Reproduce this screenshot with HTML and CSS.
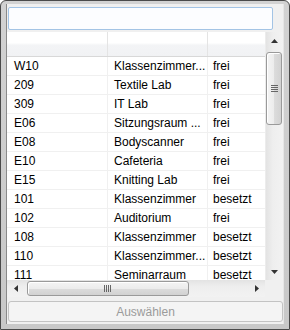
FILE: index.html
```html
<!DOCTYPE html>
<html>
<head>
<meta charset="utf-8">
<link rel="stylesheet" href="styles.css">
</head>
<body>
<div class="win">
  <div class="client">
    <div class="search"></div>
    <div class="list">
      <div class="main">
        <div class="head">
          <div class="hc c1"></div><div class="hc c2"></div><div class="hc c3"></div>
        </div>
        <div class="rows">
          <div class="row"><div class="c c1">W10</div><div class="c c2">Klassenzimmer...</div><div class="c c3">frei</div></div>
          <div class="row"><div class="c c1">209</div><div class="c c2">Textile Lab</div><div class="c c3">frei</div></div>
          <div class="row"><div class="c c1">309</div><div class="c c2">IT Lab</div><div class="c c3">frei</div></div>
          <div class="row"><div class="c c1">E06</div><div class="c c2">Sitzungsraum ...</div><div class="c c3">frei</div></div>
          <div class="row"><div class="c c1">E08</div><div class="c c2">Bodyscanner</div><div class="c c3">frei</div></div>
          <div class="row"><div class="c c1">E10</div><div class="c c2">Cafeteria</div><div class="c c3">frei</div></div>
          <div class="row"><div class="c c1">E15</div><div class="c c2">Knitting Lab</div><div class="c c3">frei</div></div>
          <div class="row"><div class="c c1">101</div><div class="c c2">Klassenzimmer</div><div class="c c3">besetzt</div></div>
          <div class="row"><div class="c c1">102</div><div class="c c2">Auditorium</div><div class="c c3">frei</div></div>
          <div class="row"><div class="c c1">108</div><div class="c c2">Klassenzimmer</div><div class="c c3">besetzt</div></div>
          <div class="row"><div class="c c1">110</div><div class="c c2">Klassenzimmer...</div><div class="c c3">besetzt</div></div>
          <div class="row"><div class="c c1">111</div><div class="c c2">Seminarraum</div><div class="c c3">besetzt</div></div>
        </div>
      </div>
      <div class="vscroll">
        <div class="sbtn"><svg width="7" height="4" viewBox="0 0 7 4"><path d="M0 4 L3.5 0 L7 4 Z" fill="#333"/></svg></div>
        <div class="vtrack">
          <div class="vthumb">
            <svg width="7" height="8" viewBox="0 0 7 8"><path d="M0 0.5H7M0 2.5H7M0 4.5H7M0 6.5H7" stroke="#666" stroke-width="1"/></svg>
          </div>
        </div>
        <div class="sbtn"><svg width="7" height="4" viewBox="0 0 7 4"><path d="M0 0 L7 0 L3.5 4 Z" fill="#333"/></svg></div>
      </div>
      <div class="hscroll">
        <div class="hbtn"><svg width="4" height="7" viewBox="0 0 4 7"><path d="M4 0 L0 3.5 L4 7 Z" fill="#333"/></svg></div>
        <div class="htrack">
          <div class="hthumb">
            <svg width="8" height="7" viewBox="0 0 8 7"><path d="M0.5 0V7M2.5 0V7M4.5 0V7M6.5 0V7" stroke="#666" stroke-width="1"/></svg>
          </div>
        </div>
        <div class="hbtn"><svg width="4" height="7" viewBox="0 0 4 7"><path d="M0 0 L4 3.5 L0 7 Z" fill="#333"/></svg></div>
      </div>
      <div class="corner"></div>
    </div>
    <div class="btnrow"><button class="btn" disabled>Auswählen</button></div>
  </div>
</div>
</body>
</html>
```
FILE: styles.css
```css
* { box-sizing: border-box; }
html, body { margin: 0; padding: 0; }
body {
  width: 290px;
  height: 330px;
  overflow: hidden;
  background: #fff;
  font-family: "Liberation Sans", Arial, sans-serif;
  font-size: 12px;
  color: #000;
}
.win {
  width: 290px;
  height: 330px;
  background: linear-gradient(#d2d2d2, #c8c8c8);
  border: 1px solid #4a4a4a;
  border-radius: 6px 6px 0 0;
  padding: 3px 5px 5px 5px;
}
.client {
  height: 320px;
  background: #f0f0f0;
  border-left: 1px solid #8a8a8a;
  border-right: 1px solid #e6e6e6;
  display: flex;
  flex-direction: column;
}
.search {
  margin: 3px 0 0 1px;
  width: 265px;
  height: 23px;
  background: #fcfdff;
  border: 1px solid #a3c4e5;
  border-radius: 2px;
}
.list {
  margin-top: 2px;
  height: 265px;
  display: grid;
  grid-template-columns: 258px 18px;
  grid-template-rows: 248px 17px;
  background: #fff;
}
.main { overflow: hidden; background: #fff; }
.head {
  height: 25px;
  display: flex;
  border-bottom: 1px solid #d8d8d8;
  background: linear-gradient(#ffffff 0, #ffffff 45%, #f3f4f6 55%, #f1f2f4 100%);
}
.hc { height: 100%; }
.c1 { width: 101px; border-right: 1px solid #e4e4e4; }
.c2 { width: 100px; border-right: 1px solid #e4e4e4; }
.c3 { width: 57px; }
.rows { height: 223px; overflow: hidden; }
.row {
  height: 19px;
  display: flex;
  border-bottom: 1px solid #f0f0f0;
}
.c {
  line-height: 18px;
  white-space: nowrap;
  overflow: hidden;
}
.row .c1 { padding-left: 7px; border-right-color: #f0f0f0; }
.row .c2 { padding-left: 6px; border-right-color: #f0f0f0; }
.row .c3 { padding-left: 5px; }
.vscroll {
  display: flex;
  flex-direction: column;
  background: linear-gradient(to right, #e3e3e3, #eeeeee 40%, #f2f2f2);
  border-left: 1px solid #ececec;
}
.sbtn {
  height: 17px;
  display: flex;
  align-items: center;
  justify-content: center;
}
.sbtn svg, .hbtn svg { display: block; }
.vtrack { flex: 1; }
.vthumb {
  margin: 3px 1px 0 0;
  height: 73px;
  border: 1px solid #9a9a9a;
  border-radius: 3px;
  background: linear-gradient(to right, #f4f4f4, #ececec 50%, #dcdcdc 51%, #d2d2d2);
  box-shadow: inset 1px 1px 0 #fff;
  display: flex;
  align-items: center;
  justify-content: center;
}
.hscroll {
  display: flex;
  background: linear-gradient(#e3e3e3, #eeeeee 40%, #f2f2f2);
}
.hbtn {
  width: 17px;
  display: flex;
  align-items: center;
  justify-content: center;
}
.htrack { flex: 1; }
.hthumb {
  margin: 1px 0 0 3px;
  width: 162px;
  height: 15px;
  border: 1px solid #9a9a9a;
  border-radius: 3px;
  background: linear-gradient(#f4f4f4, #ececec 50%, #dcdcdc 51%, #d2d2d2);
  box-shadow: inset 1px 1px 0 #fff;
  display: flex;
  align-items: center;
  justify-content: center;
}
.corner { background: #f0f0f0; }
.btnrow { margin-top: 4px; padding-left: 1px; }
.btn {
  width: 275px;
  height: 21px;
  margin: 0;
  padding: 0;
  border: 1px solid #c3c3c3;
  border-radius: 3px;
  background: #f4f4f4;
  color: #9b9b9b;
  font-family: "Liberation Sans", Arial, sans-serif;
  font-size: 12px;
}
```
